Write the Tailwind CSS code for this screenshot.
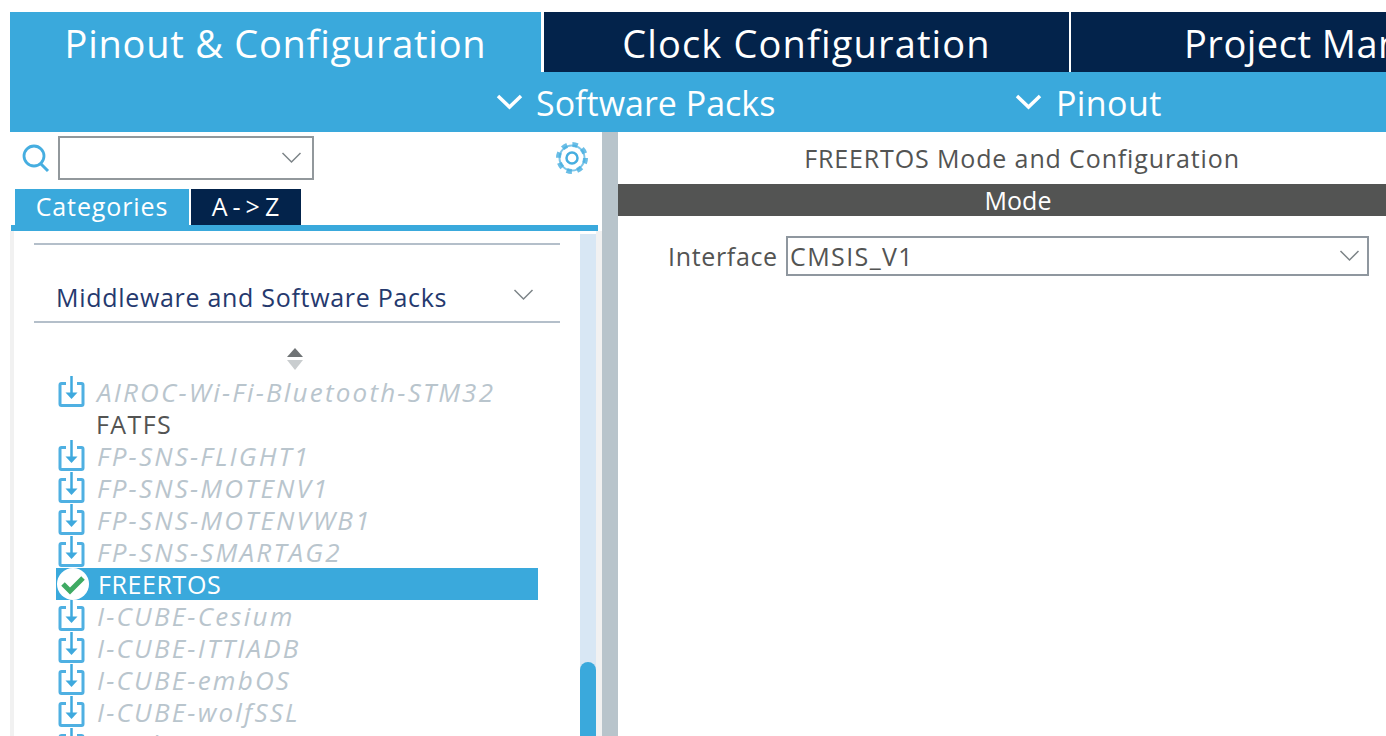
<!DOCTYPE html>
<html lang="en">

<head>
  <meta charset="UTF-8" />
  <script src="https://cdn.jsdelivr.net/npm/@tailwindcss/browser@4"></script>
  <title>Pinout & Configuration</title>
</head>

<body class="bg-white h-[736px] w-[1386px] overflow-hidden pt-3 pl-2.5 font-['Open_Sans',sans-serif] text-[#535453]">
  <!-- shared icons -->
  <svg class="hidden">
    <symbol id="dl" viewBox="0 0 28 32">
      <path d="M9 7.500H4.500Q3 7.500 3 9V28Q3 29.500 4.500 29.500H24.500Q26 29.500 26 28V9Q26 7.500 24.500 7.500H20" fill="none" stroke="#4fb0e2" stroke-width="3" />
      <path d="M14.500 0V19" fill="none" stroke="#3ea9de" stroke-width="2.500" />
      <path d="M8.500 16.500H20.500L14.500 23Z" fill="#3ea9de" />
    </symbol>
    <symbol id="chev" viewBox="0 0 20 12">
      <path d="M1 1L10 10L19 1" fill="none" stroke="currentColor" stroke-width="1.500" />
    </symbol>
  </svg>

  <!-- Main tabs -->
  <div class="flex h-[60px] bg-[#03234b] text-white text-[38px] leading-[62px]">
    <div class="w-[531px] bg-[#3aa9dc] text-center shrink-0 tracking-[0.75px]">Pinout &amp; Configuration</div>
    <div class="w-[3px] bg-white shrink-0"></div>
    <div class="w-[525px] text-center shrink-0 tracking-[1.15px]">Clock Configuration</div>
    <div class="w-[2px] bg-white shrink-0"></div>
    <div class="pl-[113px] whitespace-nowrap overflow-hidden tracking-[0.5px]">Project Manager</div>
  </div>

  <!-- Sub menu -->
  <div class="flex h-[60px] bg-[#3aa9dc] text-white text-[34px] leading-[60px]">
    <div class="flex items-center w-[519px] ml-[486px] gap-[13px] shrink-0">
      <svg class="w-[27px] h-[16px]" viewBox="0 0 27 16"><path d="M2 2L13.500 13L25 2" fill="none" stroke="white" stroke-width="3.500" /></svg>
      <span class="mt-[2px]">Software Packs</span>
    </div>
    <div class="flex items-center gap-[14px]">
      <svg class="w-[27px] h-[16px]" viewBox="0 0 27 16"><path d="M2 2L13.500 13L25 2" fill="none" stroke="white" stroke-width="3.500" /></svg>
      <span class="mt-[2px] tracking-[0.4px]">Pinout</span>
    </div>
  </div>

  <div class="flex h-[604px]">
    <!-- Left panel -->
    <div class="w-[592px] shrink-0 flex flex-col">
      <div class="h-[57px] flex items-start">
        <svg class="w-[28px] h-[30px] ml-[12px] mt-[12px]" viewBox="0 0 28 30">
          <circle cx="12" cy="12" r="10" fill="none" stroke="#46aee0" stroke-width="2.800" />
          <path d="M19 20L26 27" fill="none" stroke="#46aee0" stroke-width="3" />
        </svg>
        <div class="w-[256px] h-[44px] ml-[8px] mt-[4px] border-2 border-[#92989c] bg-white flex items-center justify-end pr-[10px] text-[#7d8488]">
          <svg class="w-[21px] h-[12px]"><use href="#chev" /></svg>
        </div>
        <svg class="w-[34px] h-[34px] ml-[241px] mt-[9px]" viewBox="0 0 34 34">
          <circle cx="17" cy="17" r="12.500" fill="none" stroke="#46aee0" stroke-width="2" stroke-opacity="0.700" />
          <circle cx="17" cy="17" r="13.500" fill="none" stroke="#46aee0" stroke-width="5" stroke-dasharray="5.300 5.300" stroke-opacity="0.800" />
          <circle cx="17" cy="17" r="5.500" fill="none" stroke="#46aee0" stroke-width="2.500" />
        </svg>
      </div>
      <div class="flex h-[36px] ml-[5px] text-white text-[25px] leading-[34px]">
        <div class="w-[174px] bg-[#3aa9dc] text-center tracking-[0.9px]">Categories</div>
        <div class="w-[110px] ml-[2px] bg-[#03234b] text-center tracking-[5px] pl-[4px]">A-&gt;Z</div>
      </div>
      <div class="h-[6px] ml-[1px] mr-[4px] bg-[#3aa9dc]"></div>

      <div class="flex-1 flex border-l-[4px] border-[#f1f1f1] overflow-hidden">
        <div class="w-[566px] shrink-0 bg-white overflow-hidden">
          <div class="h-[14px] mx-[20px] border-b-2 border-[#b4bfca]"></div>
          <div class="h-[78px] mx-[20px] border-b-2 border-[#b4bfca] flex items-end justify-between pl-[22px] pr-[26px] pb-[7px] text-[#25396e] text-[25px] leading-[34px]">
            <span class="tracking-[0.7px]">Middleware and Software Packs</span>
            <svg class="w-[21px] h-[12px] text-[#7d8488] mb-[13px]"><use href="#chev" /></svg>
          </div>
          <div class="h-[26px] mt-[24px] flex justify-center pr-[4px]">
            <svg class="w-[18px] h-[24px]" viewBox="0 0 18 24">
              <path d="M9 1L17 10H1Z" fill="#6f7375" />
              <path d="M1 13H17L9 23Z" fill="#c9cdcf" />
            </svg>
          </div>

          <!-- Pack list -->
          <div class="ml-[42px] w-[482px] text-[26px] leading-[32px] italic tracking-[2.2px] text-[#b9c5cd] mt-[3px]">
            <div class="flex h-[32px]"><svg class="w-[28px] h-[32px] ml-[1px] shrink-0"><use href="#dl" /></svg><span class="ml-[12px]">AIROC-Wi-Fi-Bluetooth-STM32</span></div>
            <div class="flex h-[32px] not-italic text-[25px] tracking-[1.4px] text-[#535453]"><span class="ml-[40px]">FATFS</span></div>
            <div class="flex h-[32px]"><svg class="w-[28px] h-[32px] ml-[1px] shrink-0"><use href="#dl" /></svg><span class="ml-[12px]">FP-SNS-FLIGHT1</span></div>
            <div class="flex h-[32px]"><svg class="w-[28px] h-[32px] ml-[1px] shrink-0"><use href="#dl" /></svg><span class="ml-[12px]">FP-SNS-MOTENV1</span></div>
            <div class="flex h-[32px]"><svg class="w-[28px] h-[32px] ml-[1px] shrink-0"><use href="#dl" /></svg><span class="ml-[12px]">FP-SNS-MOTENVWB1</span></div>
            <div class="flex h-[32px]"><svg class="w-[28px] h-[32px] ml-[1px] shrink-0"><use href="#dl" /></svg><span class="ml-[12px]">FP-SNS-SMARTAG2</span></div>
            <div class="flex items-center h-[32px] bg-[#3aa9dc] not-italic text-[25px] tracking-[0.6px] text-white">
              <svg class="w-[34px] h-[34px] shrink-0" viewBox="0 0 34 34">
                <circle cx="17" cy="17" r="16" fill="white" />
                <path d="M7 17L14 24L27 11" fill="none" stroke="#3faa63" stroke-width="5" />
              </svg>
              <span class="ml-[8px]">FREERTOS</span>
            </div>
            <div class="flex h-[32px]"><svg class="w-[28px] h-[32px] ml-[1px] shrink-0"><use href="#dl" /></svg><span class="ml-[12px]">I-CUBE-Cesium</span></div>
            <div class="flex h-[32px]"><svg class="w-[28px] h-[32px] ml-[1px] shrink-0"><use href="#dl" /></svg><span class="ml-[12px]">I-CUBE-ITTIADB</span></div>
            <div class="flex h-[32px]"><svg class="w-[28px] h-[32px] ml-[1px] shrink-0"><use href="#dl" /></svg><span class="ml-[12px]">I-CUBE-embOS</span></div>
            <div class="flex h-[32px]"><svg class="w-[28px] h-[32px] ml-[1px] shrink-0"><use href="#dl" /></svg><span class="ml-[12px]">I-CUBE-wolfSSL</span></div>
            <div class="flex h-[32px]"><svg class="w-[28px] h-[32px] ml-[1px] shrink-0"><use href="#dl" /></svg><span class="ml-[12px]">I-Cube-G-MenCC4U</span></div>
          </div>
        </div>
        <!-- Scrollbar -->
        <div class="w-[16px] mt-[3px] bg-[#d8e7f4] flex flex-col justify-end shrink-0">
          <div class="h-[74px] bg-[#3aa9dc] rounded-t-lg"></div>
        </div>
        <div class="flex-1 bg-[#f1f1f1]"></div>
      </div>
    </div>

    <!-- Splitter -->
    <div class="w-[16px] bg-[#b8c4cb] shrink-0"></div>

    <!-- Right panel -->
    <div class="flex-1 flex flex-col">
      <div class="h-[52px] text-center text-[25px] leading-[52px] pl-[40px] tracking-[0.87px]">FREERTOS Mode and Configuration</div>
      <div class="h-[32px] bg-[#535453] text-white text-center text-[25px] leading-[32px] pl-[32px]">Mode</div>
      <div class="flex items-center mt-[20px] pl-[50px]">
        <span class="text-[25px] w-[118px] pt-[2px] tracking-[0.67px]">Interface</span>
        <div class="w-[583px] h-[40px] border-2 border-[#8f979f] flex items-center justify-between pl-[2px] pr-[7px] text-[25px]">
          <span class="pt-[2px] tracking-[1.4px]">CMSIS_V1</span>
          <svg class="w-[21px] h-[12px] text-[#7d8488]"><use href="#chev" /></svg>
        </div>
      </div>
    </div>
  </div>
</body>

</html>
